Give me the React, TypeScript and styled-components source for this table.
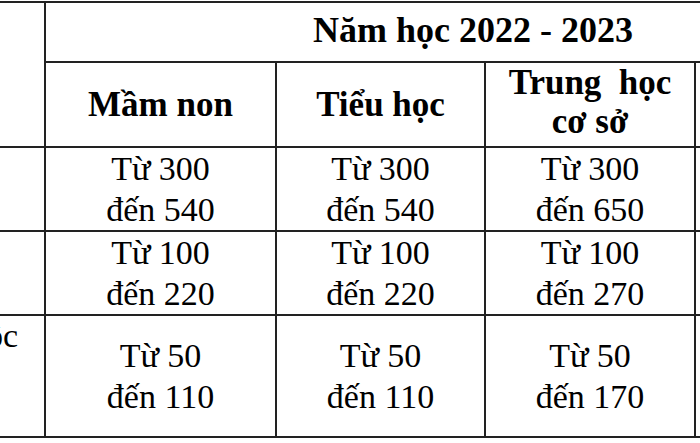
import React from 'react';
import styled, { createGlobalStyle } from 'styled-components';

const GlobalStyle = createGlobalStyle`
  html, body {
    margin: 0;
    padding: 0;
    background: #ffffff;
    overflow: hidden;
  }
`;

const Frame = styled.div`
  width: 700px;
  height: 443px;
  overflow: hidden;
  background: #ffffff;
  padding-top: 1px;
  box-sizing: border-box;
`;

const Table = styled.table`
  margin-left: -176px;
  border-collapse: collapse;
  table-layout: fixed;
  width: 1076px;
  font-family: 'Liberation Serif', 'Times New Roman', serif;
  color: #000;
`;

const Col = styled.col<{ $w: number }>`
  width: ${p => p.$w}px;
`;

const Row = styled.tr<{ $h: number }>`
  height: ${p => p.$h}px;
`;

const TitleCell = styled.th`
  border: 2px solid #222;
  padding: 0 0 4px 0;
  font-size: 36px;
  font-weight: bold;
  line-height: 38px;
  text-align: center;
  vertical-align: middle;
`;

const HeadCell = styled.th<{ $top?: boolean; $hidden?: boolean }>`
  border: 2px solid #222;
  padding: 0 0 0 ${p => (p.$hidden ? 60 : 0)}px;
  font-size: 35px;
  font-weight: bold;
  line-height: 39px;
  text-align: center;
  vertical-align: ${p => (p.$top ? 'top' : 'middle')};
  white-space: nowrap;
`;

const AreaCell = styled.td`
  border: 2px solid #222;
  padding: 0 0 0 9px;
  font-size: 34px;
  line-height: 40px;
  text-align: left;
  vertical-align: middle;
  white-space: nowrap;
`;

const FeeCell = styled.td<{ $hidden?: boolean }>`
  border: 2px solid #222;
  padding: 0 0 0 ${p => (p.$hidden ? 60 : 0)}px;
  font-size: 34px;
  line-height: 41px;
  text-align: center;
  vertical-align: middle;
`;

const fees = [
  { area: ['Thành thị'], values: [['300', '540'], ['300', '540'], ['300', '650'], ['300', '650']], h: 84 },
  { area: ['Nông thôn'], values: [['100', '220'], ['100', '220'], ['100', '270'], ['200', '270']], h: 83 },
  { area: ['Vùng dân tộc', 'thiểu số và', 'miền núi'], values: [['50', '110'], ['50', '110'], ['50', '170'], ['100', '220']], h: 122 },
];

const App: React.FC = () => {
  return (
    <Frame>
      <GlobalStyle />
      <Table>
        <colgroup>
          <Col $w={220} />
          <Col $w={231} />
          <Col $w={209} />
          <Col $w={210} />
          <Col $w={206} />
        </colgroup>
        <tbody>
          <Row $h={60}>
            <HeadCell rowSpan={2}>Khu vực</HeadCell>
            <TitleCell colSpan={4}>Năm học 2022 - 2023</TitleCell>
          </Row>
          <Row $h={85}>
            <HeadCell>Mầm non</HeadCell>
            <HeadCell>Tiểu học</HeadCell>
            <HeadCell $top>
              Trung&nbsp; học
              <br />
              cơ sở
            </HeadCell>
            <HeadCell $top $hidden>
              THPT
            </HeadCell>
          </Row>
          {fees.map((r, i) => (
            <Row key={i} $h={r.h}>
              <AreaCell>
                {r.area.map((line, j) => (
                  <React.Fragment key={j}>
                    {j > 0 && <br />}
                    {line}
                  </React.Fragment>
                ))}
              </AreaCell>
              {r.values.map((v, j) => (
                <FeeCell key={j} $hidden={j === 3}>
                  Từ {v[0]}
                  <br />
                  đến {v[1]}
                </FeeCell>
              ))}
            </Row>
          ))}
        </tbody>
      </Table>
    </Frame>
  );
};

export default App;
